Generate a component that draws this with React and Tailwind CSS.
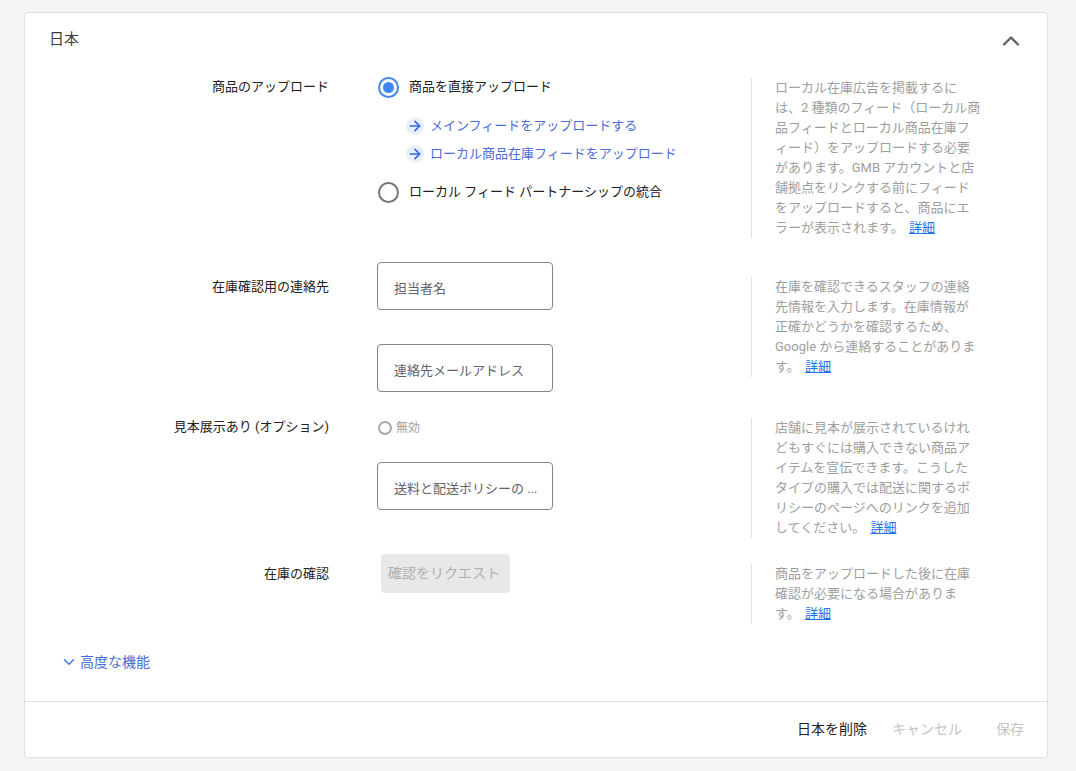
import { ChevronUp, ChevronDown, ArrowRight } from "lucide-react";

const Help = ({ children, className = "" }) => (
  <div className={`w-[231px] shrink-0 border-l border-[#e0e0e0] pl-[23px] pr-[1px] text-[13px] leading-5 text-[#9e9e9e] ${className}`}>
    {children}{" "}
    <a href="#" className="ml-[2px] text-[#1a73e8] underline">詳細</a>
  </div>
);

const Label = ({ children, className = "" }) => (
  <div className={`w-[304px] shrink-0 text-right text-[13px] leading-5 text-[#212121] ${className}`}>
    {children}
  </div>
);

const Radio = ({ checked }) => (
  <span className={`flex h-[21px] w-[21px] shrink-0 items-center justify-center rounded-full border-2 ${checked ? "border-[#4285f4]" : "border-[#757575]"}`}>
    {checked && <span className="h-[11px] w-[11px] rounded-full bg-[#4285f4]"></span>}
  </span>
);

const FeedLink = ({ children }) => (
  <div className="flex h-5 items-center">
    <span className="flex h-[18px] w-[18px] items-center justify-center rounded-full bg-[#e8f0fe] text-[#3367d6]">
      <ArrowRight size={16} strokeWidth={2.5} />
    </span>
    <a href="#" className="ml-[6px] text-[13px] leading-5 text-[#4d6bd8]">{children}</a>
  </div>
);

const Field = ({ children }) => (
  <div className="flex h-12 w-[176px] items-center rounded border border-[#80868b] bg-white pl-4 pr-2 pt-[5px] text-[13px] text-[#5f6368]">
    <span className="whitespace-nowrap">{children}</span>
  </div>
);

export default function App() {
  return (
    <div className="min-h-[771px] bg-[#f4f4f4] px-6 pt-3 font-['Roboto','Noto_Sans_CJK_JP',sans-serif]">
      <div className="h-[746px] w-[1024px] rounded border border-[#e0e0e0] bg-white">
        <div className="flex h-[53px] items-center justify-between pl-6 pr-[22px]">
          <span className="text-[15px] text-[#3c3c3c]">日本</span>
          <ChevronUp size={28} strokeWidth={2} className="mt-[2px] text-[#5f6368]" />
        </div>

        {/* Upload */}
        <div className="mt-3 flex">
          <Label className="-mt-[1px]">商品のアップロード</Label>
          <div className="ml-12 w-[374px] shrink-0 pl-[1px]">
            <div className="-mt-[1px] flex h-5 items-center">
              <Radio checked />
              <span className="ml-[10px] text-[13px] text-[#212121]">商品を直接アップロード</span>
            </div>
            <div className="ml-[28px] mt-[19px] space-y-2">
              <FeedLink>メインフィードをアップロードする</FeedLink>
              <FeedLink>ローカル商品在庫フィードをアップロード</FeedLink>
            </div>
            <div className="mt-[18px] flex h-5 items-center">
              <Radio />
              <span className="ml-[10px] text-[13px] text-[#212121]">ローカル フィード パートナーシップの統合</span>
            </div>
          </div>
          <Help>
            ローカル在庫広告を掲載するには、2 種類のフィード（ローカル商品フィードとローカル商品在庫フィード）をアップロードする必要があります。GMB アカウントと店舗拠点をリンクする前にフィードをアップロードすると、商品にエラーが表示されます。
          </Help>
        </div>

        {/* Contact */}
        <div className="mt-6 flex">
          <Label className="mt-[15px]">在庫確認用の連絡先</Label>
          <div className="ml-12 w-[374px] shrink-0">
            <Field>担当者名</Field>
            <div className="mt-[34px]">
              <Field>連絡先メールアドレス</Field>
            </div>
          </div>
          <Help className="mt-[15px] h-[100px]">
            在庫を確認できるスタッフの連絡先情報を入力します。在庫情報が正確かどうかを確認するため、Google から連絡することがあります。
          </Help>
        </div>

        {/* Sample */}
        <div className="mt-[26px] flex">
          <Label className="-mt-[1px]">見本展示あり (オプション)</Label>
          <div className="ml-12 w-[374px] shrink-0">
            <div className="flex h-5 items-center pl-[1px]">
              <span className="h-[14px] w-[14px] rounded-full border-2 border-[#a8a8a8]"></span>
              <span className="ml-1 text-[12px] text-[#9e9e9e]">無効</span>
            </div>
            <div className="mt-6">
              <Field>送料と配送ポリシーの ...</Field>
            </div>
          </div>
          <Help className="h-[120px]">
            店舗に見本が展示されているけれどもすぐには購入できない商品アイテムを宣伝できます。こうしたタイプの購入では配送に関するポリシーのページへのリンクを追加してください。
          </Help>
        </div>

        {/* Verification */}
        <div className="mt-[26px] flex">
          <Label>在庫の確認</Label>
          <div className="ml-12 w-[374px] shrink-0 pl-1">
            <button className="-mt-[10px] block h-[39px] w-[129px] rounded bg-[#e7e8e8] pl-[7px] text-left text-[14px] text-[#b0b0b0]">確認をリクエスト</button>
          </div>
          <Help className="h-[60px]">
            商品をアップロードした後に在庫確認が必要になる場合があります。
          </Help>
        </div>

        <div className="ml-[35px] mt-[28px] flex h-5 items-center text-[#4d6bd8]">
          <ChevronDown size={18} strokeWidth={2} className="text-[#3b78e7]" />
          <span className="ml-[2px] text-[14px]">高度な機能</span>
        </div>

        <div className="mt-[29px] flex h-[56px] items-center justify-end border-t border-[#e0e0e0] pr-[23px] text-[14px]">
          <span className="text-[#212121]">日本を削除</span>
          <span className="ml-[25px] text-[#c4c4c4]">キャンセル</span>
          <span className="ml-[34px] text-[#c4c4c4]">保存</span>
        </div>
      </div>
    </div>
  );
}
